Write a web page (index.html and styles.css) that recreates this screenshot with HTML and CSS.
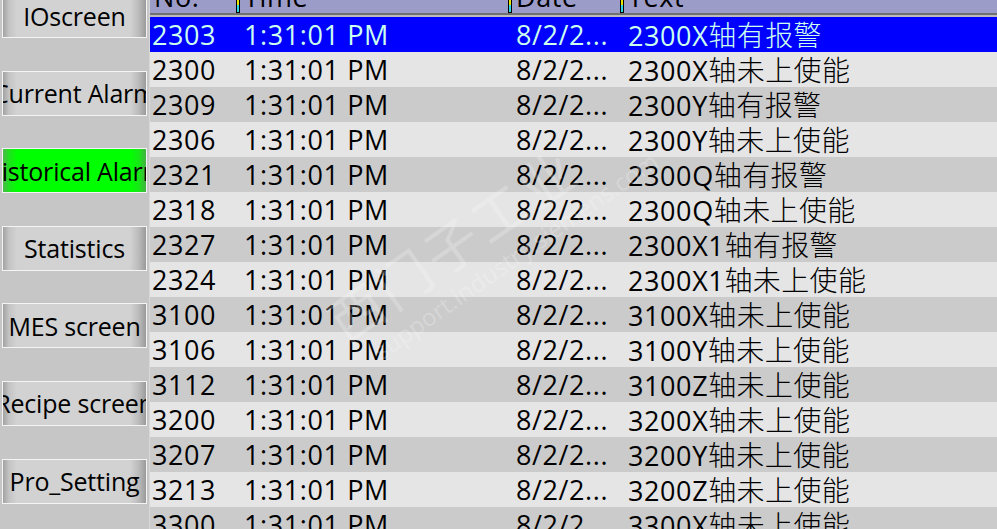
FILE: index.html
```html
<!DOCTYPE html>
<html lang="zh">
	<head>
		<meta charset="UTF-8">
		<title>Historical Alarm</title>
		<link rel="stylesheet" href="styles.css">
	</head>
	<body>
		<div class="screen">
			<div class="side">
				<div class="btn first"><span>IOscreen</span></div>
				<div class="btn"><span>Current Alarm</span></div>
				<div class="btn active"><span>Historical Alarm</span></div>
				<div class="btn"><span>Statistics</span></div>
				<div class="btn"><span>MES screen</span></div>
				<div class="btn"><span>Recipe screen</span></div>
				<div class="btn"><span>Pro_Setting</span></div>
			</div>
			<div class="table">
				<div class="head">
					<div class="hcell c-no"><span>No.</span></div>
					<div class="hcell"><i class="mark"></i><span>Time</span></div>
					<div class="hcell"><i class="mark"></i><span>Date</span></div>
					<div class="hcell"><i class="mark"></i><span>Text</span></div>
				</div>
				<div class="rule"></div>
				<div class="row sel"><div class="c-no">2303</div><div>1:31:01 PM</div><div>8/2/2...</div><div>2300X<span class="cn">轴有报警</span></div></div>
				<div class="row"><div class="c-no">2300</div><div>1:31:01 PM</div><div>8/2/2...</div><div>2300X<span class="cn">轴未上使能</span></div></div>
				<div class="row"><div class="c-no">2309</div><div>1:31:01 PM</div><div>8/2/2...</div><div>2300Y<span class="cn">轴有报警</span></div></div>
				<div class="row"><div class="c-no">2306</div><div>1:31:01 PM</div><div>8/2/2...</div><div>2300Y<span class="cn">轴未上使能</span></div></div>
				<div class="row"><div class="c-no">2321</div><div>1:31:01 PM</div><div>8/2/2...</div><div>2300Q<span class="cn">轴有报警</span></div></div>
				<div class="row"><div class="c-no">2318</div><div>1:31:01 PM</div><div>8/2/2...</div><div>2300Q<span class="cn">轴未上使能</span></div></div>
				<div class="row"><div class="c-no">2327</div><div>1:31:01 PM</div><div>8/2/2...</div><div>2300X1<span class="cn">轴有报警</span></div></div>
				<div class="row"><div class="c-no">2324</div><div>1:31:01 PM</div><div>8/2/2...</div><div>2300X1<span class="cn">轴未上使能</span></div></div>
				<div class="row"><div class="c-no">3100</div><div>1:31:01 PM</div><div>8/2/2...</div><div>3100X<span class="cn">轴未上使能</span></div></div>
				<div class="row"><div class="c-no">3106</div><div>1:31:01 PM</div><div>8/2/2...</div><div>3100Y<span class="cn">轴未上使能</span></div></div>
				<div class="row"><div class="c-no">3112</div><div>1:31:01 PM</div><div>8/2/2...</div><div>3100Z<span class="cn">轴未上使能</span></div></div>
				<div class="row"><div class="c-no">3200</div><div>1:31:01 PM</div><div>8/2/2...</div><div>3200X<span class="cn">轴未上使能</span></div></div>
				<div class="row"><div class="c-no">3207</div><div>1:31:01 PM</div><div>8/2/2...</div><div>3200Y<span class="cn">轴未上使能</span></div></div>
				<div class="row"><div class="c-no">3213</div><div>1:31:01 PM</div><div>8/2/2...</div><div>3200Z<span class="cn">轴未上使能</span></div></div>
				<div class="row"><div class="c-no">3300</div><div>1:31:01 PM</div><div>8/2/2...</div><div>3300X<span class="cn">轴未上使能</span></div></div>
			</div>
		</div>
		<div class="wm">
			<div class="wm-cn">西门子工业</div>
			<div class="wm-en">support.industry.siemens.com</div>
		</div>
	</body>
</html>
```

FILE: styles.css
```css
html, body {
	margin: 0;
	height: 100%;
	overflow: hidden;
	background: #c6c6c6;
}

.screen {
	display: flex;
	height: 529px;
	font-family: "Open Sans", "Noto Sans CJK SC", sans-serif;
}

/* left navigation */
.side {
	width: 147px;
	flex: none;
	display: flex;
	flex-direction: column;
	gap: 32.6px;
	padding-left: 2px;
	border-right: 1px solid #d8d8d8;
}

.btn {
	width: 143px;
	height: 43px;
	flex: none;
	border: 1px solid #f4f4f4;
	background: linear-gradient(to right, #a2a2a2 0, #c4c4c4 6px, #d2d2d2 14px, #d2d2d2 calc(100% - 16px), #bababa calc(100% - 7px), #9a9a9a 100%);
	display: flex;
	justify-content: center;
	align-items: center;
	overflow: hidden;
	white-space: nowrap;
	font-size: 25px;
	letter-spacing: -0.2px;
	color: #000;
}

.btn.first {
	margin-top: -7px;
}

.btn.active {
	background: linear-gradient(to right, #4cb84c 0, #20e020 6px, #00ff00 14px, #00ff00 calc(100% - 16px), #18e818 calc(100% - 7px), #44b044 100%);
}

/* alarm table */
.table {
	flex: 1;
	min-width: 0;
	font-size: 27px;
	letter-spacing: 0.6px;
}

.head, .row {
	display: grid;
	grid-template-columns: 88px 272px 112px 1fr;
}

.head {
	height: 13px;
	background: #9c9cc8;
	overflow: hidden;
}

.hcell {
	display: flex;
	align-items: flex-end;
	gap: 4px;
	line-height: 33px;
	height: 13px;
}

.hcell.c-no {
	padding-left: 4px;
}

.mark {
	width: 4px;
	height: 13px;
	flex: none;
	align-self: flex-start;
	margin-left: -2px;
	border: 1px solid #000;
	border-top: none;
	background: linear-gradient(#e8e800 0, #e8e800 5px, #30d8e8 5px, #30d8e8 100%);
	box-sizing: border-box;
}

.rule {
	height: 2px;
	border-bottom: 2px solid #bcbcbc;
	background: #707070;
}

.row {
	height: 35px;
	align-items: center;
	line-height: 35px;
	white-space: nowrap;
	color: #000;
	background: #e5e5e5;
}

.row:nth-of-type(odd) {
	background: #cbcbcb;
}

.row > div {
	padding-left: 6px;
	overflow: hidden;
}

.row > div.c-no {
	padding-left: 2px;
}

.cn {
	font-family: "Noto Sans CJK SC", sans-serif;
	font-size: 28px;
	font-weight: 300;
	letter-spacing: 0.4px;
}

.row.sel {
	background: #0000ff;
	color: #ccffee;
}

/* faint site watermark */
.wm {
	position: absolute;
	left: 310px;
	top: 190px;
	transform: rotate(-35deg);
	color: #fff;
	opacity: 0.22;
	pointer-events: none;
	font-family: "Noto Sans CJK SC", sans-serif;
}

.wm-cn {
	font-size: 54px;
	letter-spacing: 4px;
	line-height: 60px;
}

.wm-en {
	font-family: "Open Sans", sans-serif;
	font-size: 24px;
	margin-left: 20px;
}
```
